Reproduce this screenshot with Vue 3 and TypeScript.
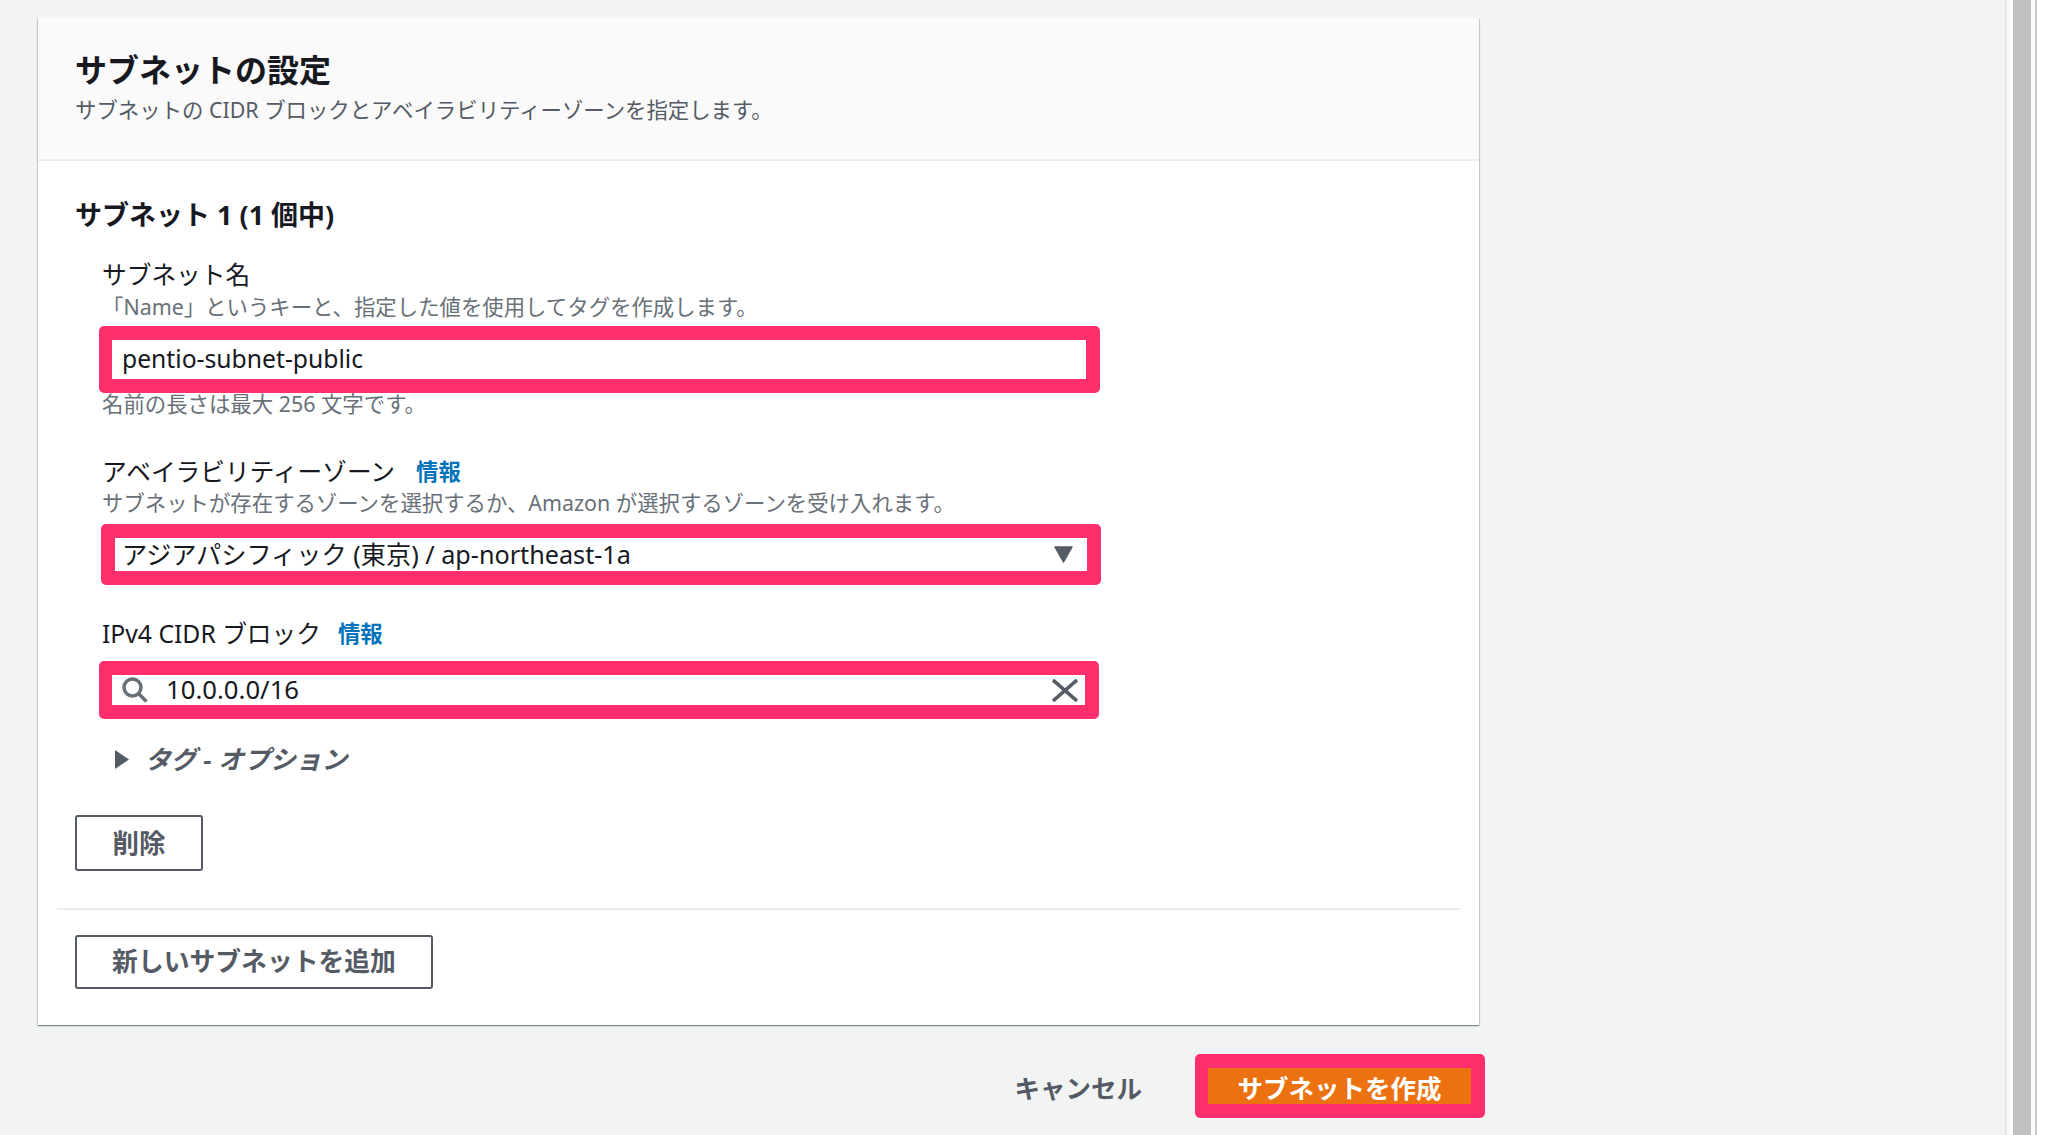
<script setup lang="ts">
const title: string = 'サブネットの設定'
</script>

<template>
  <div class="page">
    <main class="main">
      <section class="card">
        <header class="card-head">
          <h2 class="title">{{ title }}</h2>
          <p class="subtitle">サブネットの CIDR ブロックとアベイラビリティーゾーンを指定します。</p>
        </header>
        <div class="card-body">
          <h3 class="section">サブネット 1 (1 個中)</h3>
          <div class="fields">
            <div class="label first">サブネット名</div>
            <div class="desc d1">「Name」というキーと、指定した値を使用してタグを作成します。</div>
            <div class="mark mark-name"><div class="control">pentio-subnet-public</div></div>
            <div class="desc hint">名前の長さは最大 256 文字です。</div>

            <div class="label l2"><span>アベイラビリティーゾーン</span><a class="info">情報</a></div>
            <div class="desc d2">サブネットが存在するゾーンを選択するか、Amazon が選択するゾーンを受け入れます。</div>
            <div class="mark mark-az">
              <div class="control select">
                <span>アジアパシフィック (東京) / ap-northeast-1a</span>
                <svg class="caret" width="19" height="17" viewBox="0 0 19 17"><path d="M1 1h17l-8.500 15z" fill="#545b64" stroke="#545b64" stroke-width="1.500" stroke-linejoin="round"/></svg>
              </div>
            </div>

            <div class="label l3"><span>IPv4 CIDR ブロック</span><a class="info near">情報</a></div>
            <div class="mark mark-cidr">
              <div class="control search">
                <svg class="glass" width="26" height="26" viewBox="0 0 26 26" fill="none" stroke="#687078" stroke-width="3.500"><circle cx="10.500" cy="10.500" r="8.500"/><path d="M16.500 16.500l8 8"/></svg>
                <span class="cidr">10.0.0.0/16</span>
                <svg class="clear" width="26" height="23" viewBox="0 0 26 23" fill="none" stroke="#545b64" stroke-width="3.500"><path d="M1 1l24 21M25 1L1 22"/></svg>
              </div>
            </div>

            <div class="tags">
              <svg width="14" height="19" viewBox="0 0 14 19"><path d="M0 0L14 9.500 0 19z" fill="#545b64"/></svg>
              <span>タグ - オプション</span>
            </div>
          </div>
          <button class="btn del">削除</button>
          <div class="rule"></div>
          <button class="btn add">新しいサブネットを追加</button>
        </div>
      </section>
      <footer class="actions">
        <span class="cancel">キャンセル</span>
        <div class="mark mark-create"><div class="create">サブネットを作成</div></div>
      </footer>
    </main>
    <aside class="scrollbar">
      <div class="track"><div class="thumb"></div></div>
      <div class="edge"></div>
    </aside>
  </div>
</template>

<style>
html, body { margin: 0; background: #f2f3f3; }
</style>

<style scoped>
.page {
  display: flex;
  height: 1135px;
  overflow: hidden;
  background: #f2f3f3;
  font-family: "Noto Sans", "Noto Sans CJK JP", sans-serif;
  color: #16191f;
}
.main {
  flex: 1;
  padding: 18px 0 0 38px;
}
.card {
  width: 1441px;
  background: #fff;
  box-shadow: 0 1px 1px 0 rgba(0, 28, 36, 0.3), 1px 1px 1px 0 rgba(0, 28, 36, 0.15), -1px 1px 1px 0 rgba(0, 28, 36, 0.15);
}
.card-head {
  height: 141px;
  background: #fafafa;
  border-bottom: 2px solid #eaeded;
  padding-left: 37px;
}
.title {
  margin: 0;
  padding-top: 32px;
  font-size: 32px;
  line-height: 40px;
  font-weight: 700;
}
.subtitle {
  margin: 6px 0 0;
  font-size: 21.400px;
  line-height: 28px;
  color: #545b64;
}
.card-body {
  padding: 36px 19px 36px 37px;
  display: flex;
  flex-direction: column;
  align-items: flex-start;
}
.section {
  margin: 0;
  font-size: 27px;
  line-height: 36px;
  font-weight: 700;
}
.fields {
  padding-left: 24px;
  width: 1040px;
}
.label {
  padding-left: 3px;
  font-size: 24.700px;
  line-height: 30px;
  height: 30px;
  display: flex;
  align-items: center;
}
.label.first { margin-top: 27px; }
.label.l2 { margin-top: 41px; }
.label.l3 { margin-top: 34px; }
.info {
  margin-left: 21px;
  font-size: 22.400px;
  font-weight: 700;
  color: #0073bb;
}
.info.near { margin-left: 17px; }
.desc {
  padding-left: 3px;
  font-size: 21.400px;
  line-height: 24px;
  color: #687078;
}
.d1 { margin-top: 5px; }
.d2 { margin-top: 4px; }
.hint { margin-top: -1px; }
.mark {
  box-sizing: border-box;
  border: 14px solid #ff2f6e;
  border-left-width: 13px;
  border-right-width: 14px;
  border-radius: 5px;
}
.mark-name { width: 1001px; height: 67px; margin-top: 7px; }
.mark-az { width: 1000px; height: 61px; margin-top: 9px; margin-left: 2px; border-left-width: 14px; }
.mark-cidr { width: 1000px; height: 58px; margin-top: 12px; }
.control {
  box-sizing: border-box;
  height: 100%;
  background: #fff;
  padding: 0 0 3px 10px;
  display: flex;
  align-items: center;
  font-size: 24.700px;
  white-space: nowrap;
}
.select { padding: 0 14px 4px 7px; justify-content: space-between; font-size: 25.200px; }
.caret { margin-top: 3px; }
.search { padding: 0 7px 0 10px; font-size: 25.700px; }
.cidr { margin-left: 18px; flex: 1; padding-bottom: 2px; }
.tags {
  margin-top: 25px;
  padding-left: 16px;
  height: 30px;
  display: flex;
  align-items: center;
  gap: 16px;
  font-size: 25.800px;
  font-weight: 700;
  font-style: italic;
  color: #545b64;
}
.tags span { padding-bottom: 3px; }
.btn {
  box-sizing: border-box;
  display: block;
  border: 2px solid #545b64;
  border-radius: 3px;
  background: #fff;
  color: #545b64;
  font: 700 25.800px "Noto Sans", "Noto Sans CJK JP", sans-serif;
  padding: 0 0 4px;
}
.del { width: 128px; height: 56px; margin-top: 41px; font-size: 26.500px; }
.rule {
  align-self: stretch;
  height: 2px;
  background: #eaeded;
  margin: 37px 0 25px -18px;
}
.add { width: 358px; height: 54px; }
.actions {
  width: 1447px;
  margin-top: 29px;
  display: flex;
  justify-content: flex-end;
  align-items: center;
  gap: 53px;
}
.cancel {
  font-size: 25.500px;
  font-weight: 700;
  color: #545b64;
}
.mark-create { width: 290px; height: 64px; }
.create {
  height: 100%;
  background: #ec7211;
  color: #fff;
  font-size: 25.500px;
  font-weight: 700;
  display: flex;
  align-items: center;
  justify-content: center;
}
.scrollbar {
  width: 47px;
  display: flex;
  height: 100%;
  background: #fff;
}
.track {
  box-sizing: border-box;
  width: 30px;
  background: #fafafa;
  border-left: 2px solid #e6e6e6;
  padding: 0 4px 0 6px;
}
.thumb { height: 100%; background: #c1c1c1; }
.edge { width: 2px; background: #c8ccce; }
</style>
